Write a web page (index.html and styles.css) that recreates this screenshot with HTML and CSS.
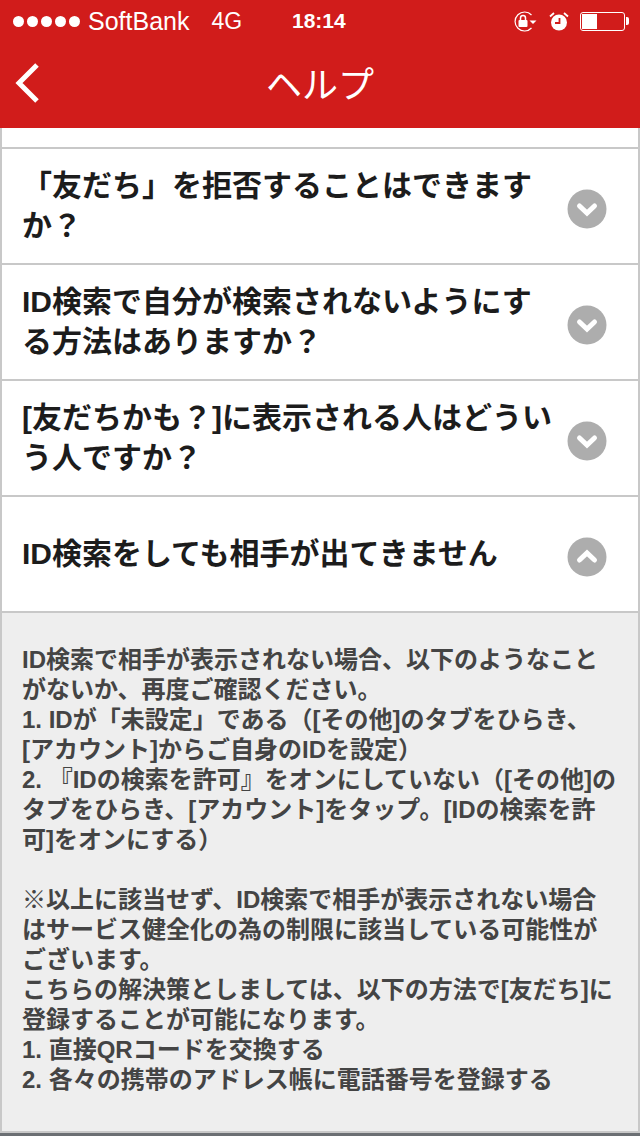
FILE: index.html
```html
<!DOCTYPE html>
<html lang="ja">
    <head>
        <meta charset="UTF-8">
        <meta name="viewport" content="width=device-width, initial-scale=1.0">
        <title>ヘルプ</title>
        <link rel="stylesheet" href="styles.css">
    </head>
    <body>
        <header class="app-header">
            <div class="status-bar">
                <div class="status-left">
                    <span class="signal"><i></i><i></i><i></i><i></i><i></i></span>
                    <span class="carrier">SoftBank</span>
                    <span class="network">4G</span>
                </div>
                <div class="status-time">18:14</div>
                <div class="status-right">
                    <svg class="icon-lock" width="24" height="21" viewBox="0 0 24 21">
                        <path d="M18.500 4A9.500 9.500 0 1 0 18.500 17" fill="none" stroke="#fff" stroke-width="1.200"/>
                        <path d="M16.500 9.500h7l-3.500 3.500z" fill="#fff"/>
                        <rect x="5.500" y="9" width="9" height="7" rx="1" fill="#fff"/>
                        <path d="M7.500 9V7a2.500 2.500 0 0 1 5 0v2" fill="none" stroke="#fff" stroke-width="1.500"/>
                    </svg>
                    <svg class="icon-alarm" width="20" height="19" viewBox="0 0 20 19">
                        <circle cx="10" cy="10.500" r="8" fill="#fff"/>
                        <path d="M10.500 6v5H6" fill="none" stroke="#d11c1b" stroke-width="1.800"/>
                        <path d="M1 4.500l4-3.500M19 4.500l-4-3.500" fill="none" stroke="#fff" stroke-width="1.800"/>
                    </svg>
                    <div class="battery"><div class="battery-level"></div></div>
                    <div class="battery-tip"></div>
                </div>
            </div>
            <div class="nav-bar">
                <svg class="back" width="30" height="44" viewBox="0 0 30 44">
                    <path d="M25 4L7 22l18 18" fill="none" stroke="#fff" stroke-width="5"/>
                </svg>
                <h1>ヘルプ</h1>
            </div>
        </header>

        <div class="content">
            <div class="spacer"></div>
            <div class="faq-row">
                <p class="faq-title">「友だち」を拒否することはできますか？</p>
                <svg class="toggle" width="40" height="40" viewBox="0 0 40 40">
                    <circle cx="20" cy="20" r="19.500" fill="#adadad"/>
                    <path d="M12.500 17l7.500 7 7.500-7" fill="none" stroke="#fff" stroke-width="5" stroke-linecap="round"/>
                </svg>
            </div>
            <div class="faq-row">
                <p class="faq-title">ID検索で自分が検索されないようにする方法はありますか？</p>
                <svg class="toggle" width="40" height="40" viewBox="0 0 40 40">
                    <circle cx="20" cy="20" r="19.500" fill="#adadad"/>
                    <path d="M12.500 17l7.500 7 7.500-7" fill="none" stroke="#fff" stroke-width="5" stroke-linecap="round"/>
                </svg>
            </div>
            <div class="faq-row">
                <p class="faq-title">[友だちかも？]に表示される人はどういう人ですか？</p>
                <svg class="toggle" width="40" height="40" viewBox="0 0 40 40">
                    <circle cx="20" cy="20" r="19.500" fill="#adadad"/>
                    <path d="M12.500 17l7.500 7 7.500-7" fill="none" stroke="#fff" stroke-width="5" stroke-linecap="round"/>
                </svg>
            </div>
            <div class="faq-row">
                <p class="faq-title">ID検索をしても相手が出てきません</p>
                <svg class="toggle" width="40" height="40" viewBox="0 0 40 40">
                    <circle cx="20" cy="20" r="19.500" fill="#adadad"/>
                    <path d="M12.500 23l7.500-7 7.500 7" fill="none" stroke="#fff" stroke-width="5" stroke-linecap="round"/>
                </svg>
            </div>
            <div class="answer">
                <p>ID検索で相手が表示されない場合、以下のようなこと<br>がないか、再度ご確認ください。<br>1. IDが「未設定」である（[その他]のタブをひらき、<br>[アカウント]からご自身のIDを設定）<br>2. 『IDの検索を許可』をオンにしていない（[その他]の<br>タブをひらき、[アカウント]をタップ。[IDの検索を許<br>可]をオンにする）</p>
                <p>※以上に該当せず、ID検索で相手が表示されない場合<br>はサービス健全化の為の制限に該当している可能性が<br>ございます。<br>こちらの解決策としましては、以下の方法で[友だち]に<br>登録することが可能になります。<br>1. 直接QRコードを交換する<br>2. 各々の携帯のアドレス帳に電話番号を登録する</p>
            </div>
        </div>
        <div class="bottom-edge"></div>
    </body>
</html>
```

FILE: styles.css
```css
html, body {
    margin: 0;
    padding: 0;
}

body {
    width: 640px;
    height: 1136px;
    overflow: hidden;
    display: flex;
    flex-direction: column;
    background-color: #fff;
    font-family: "Liberation Sans", "Noto Sans CJK JP", sans-serif;
}

/* Header */
.app-header {
    height: 128px;
    background-color: #d11c1b;
    color: #fff;
    flex-shrink: 0;
}

.status-bar {
    height: 40px;
    display: flex;
    align-items: center;
    justify-content: space-between;
    padding: 2px 11px 0 13px;
    box-sizing: border-box;
    font-size: 25px;
    position: relative;
}

.status-left {
    display: flex;
    align-items: center;
}

.signal {
    display: flex;
    gap: 3px;
    margin-right: 8px;
}

.signal i {
    width: 11px;
    height: 11px;
    border-radius: 50%;
    background-color: #fff;
}

.network {
    margin-left: 22px;
    font-size: 23px;
}

.status-time {
    position: absolute;
    left: 292px;
    top: 9px;
    font-weight: bold;
    font-size: 21px;
}

.status-right {
    display: flex;
    align-items: center;
}

.icon-lock {
    margin-right: 12px;
}

.icon-alarm {
    margin-right: 11px;
}

.battery {
    width: 41px;
    height: 15px;
    border: 1px solid #fff;
    border-radius: 3px;
    padding: 1px;
}

.battery-level {
    width: 15px;
    height: 15px;
    background-color: #fff;
}

.battery-tip {
    width: 3px;
    height: 8px;
    margin-left: 1px;
    background-color: #fff;
    border-radius: 0 2px 2px 0;
}

.nav-bar {
    height: 88px;
    display: flex;
    align-items: center;
    justify-content: center;
    position: relative;
}

.back {
    position: absolute;
    left: 12px;
    top: 21px;
}

.nav-bar h1 {
    margin: 0 0 4px;
    font-size: 36px;
    font-weight: normal;
}

/* List */
.content {
    flex: 1;
    border-left: 2px solid #c8c8c8;
    border-right: 2px solid #c8c8c8;
    display: flex;
    flex-direction: column;
}

.spacer {
    border-bottom: 2px solid #c8c8c8;
    box-sizing: border-box;
    flex-shrink: 0;
    height: 21px;
}

.faq-row {
    height: 116px;
    box-sizing: border-box;
    flex-shrink: 0;
    display: flex;
    align-items: center;
    padding: 0 31px 0 20px;
    border-bottom: 2px solid #c8c8c8;
}

.faq-title {
    margin: 0;
    width: 532px;
    flex-shrink: 0;
    font-size: 30px;
    line-height: 40px;
    font-weight: bold;
    color: #1c1c1c;
}

.toggle {
    margin-left: auto;
    margin-top: 6px;
    flex-shrink: 0;
}

.answer {
    flex: 1;
    background-color: #eeeeee;
    padding: 32px 20px 0;
    border-bottom: 2px solid #c8c8c8;
    color: #444;
    font-size: 24px;
    line-height: 30px;
    font-weight: bold;
    white-space: nowrap;
}

.answer p {
    margin: 0 0 30px;
}

.bottom-edge {
    height: 3px;
    background-color: #6b6f73;
    flex-shrink: 0;
}
```
